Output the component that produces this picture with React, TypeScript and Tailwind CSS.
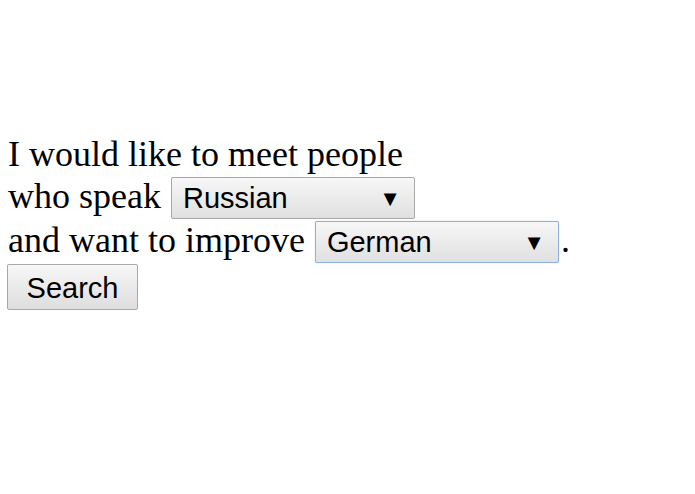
import React from 'react';

interface FakeSelectProps {
  value: string;
  focused?: boolean;
}

function FakeSelect({ value, focused }: FakeSelectProps) {
  return (
    <span
      className={`inline-flex items-center justify-between w-[244px] h-[42px] pl-[11px] pr-[13px] pt-[2px] rounded-[2px] border bg-gradient-to-b from-[#f7f7f7] to-[#e0e0e0] font-['Liberation_Sans',Arial,sans-serif] text-[29px] text-black leading-none ${
        focused ? 'border-[#8fb0dc] shadow-[0_0_1px_#8fb0dc]' : 'border-[#a8a8a8]'
      }`}
    >
      <span>{value}</span>
      <span className="text-[22px]">▼</span>
    </span>
  );
}

export default function App() {
  return (
    <div className="min-h-[494px] bg-white pt-[130px] pl-2 font-['Liberation_Serif','Times_New_Roman',serif] text-[36px] text-black">
      <div className="h-[39px] leading-[48px]">I would like to meet people</div>
      <div className="h-[44px] flex items-baseline gap-[10px]">
        <span>who speak</span>
        <FakeSelect value="Russian" />
      </div>
      <div className="h-[44px] flex items-baseline">
        <span className="mr-[10px]">and want to improve</span>
        <FakeSelect value="German" focused />
        <span className="ml-[2px]">.</span>
      </div>
      <button className="block -ml-px mt-[7px] w-[131px] h-[46px] pt-[2px] rounded-[2px] border border-[#a8a8a8] bg-gradient-to-b from-[#f7f7f7] to-[#dedede] font-['Liberation_Sans',Arial,sans-serif] text-[29px] leading-none text-black">
        Search
      </button>
    </div>
  );
}
